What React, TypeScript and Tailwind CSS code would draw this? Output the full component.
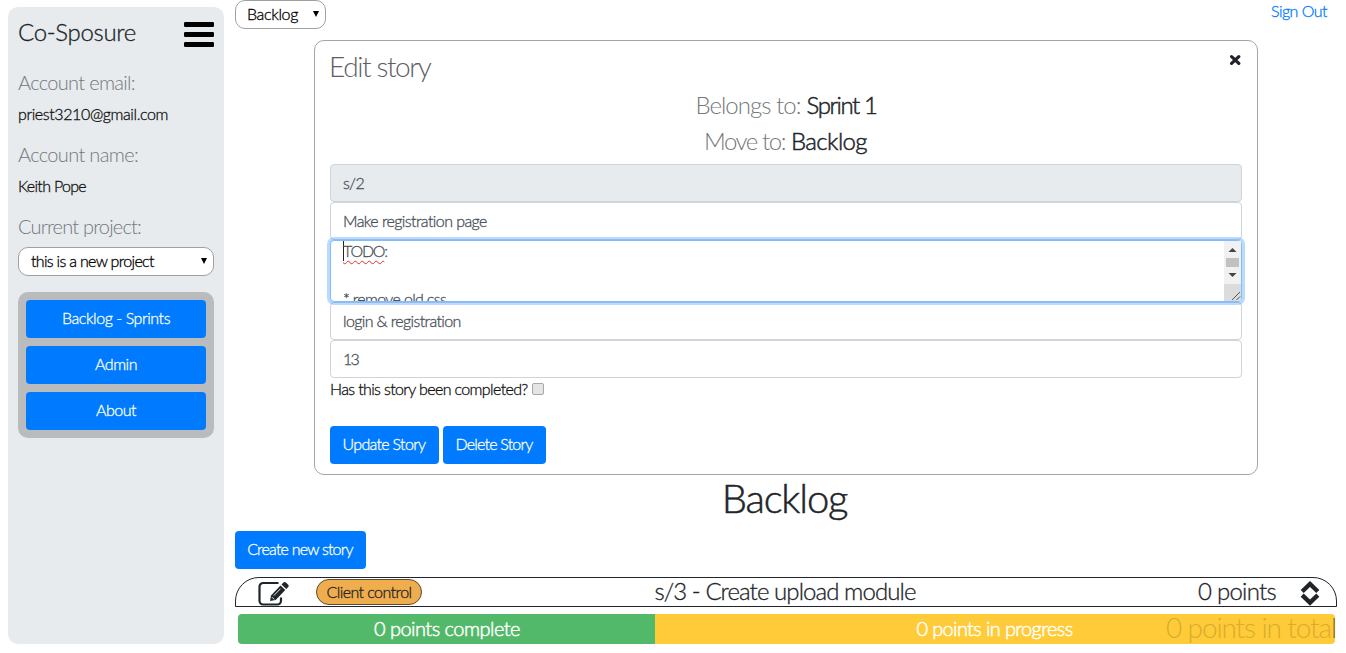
import React from 'react';

const BUTTON =
  'flex h-[38px] items-center justify-center whitespace-nowrap rounded-[4px] bg-[#007bff] pb-[2px] text-[16px] leading-6 text-white';
const FIELD = 'flex h-[38px] items-center rounded-[4px] border border-[#ced4da] px-3 text-[16px] leading-6 text-[#495057]';
const THIN = '[-webkit-text-stroke:0px]';

function BarsIcon() {
  return (
    <svg width="30" height="25" viewBox="0 0 30 25" fill="#000">
      <rect y="0" width="30" height="5" rx="1.2" />
      <rect y="10" width="30" height="5" rx="1.2" />
      <rect y="20" width="30" height="5" rx="1.2" />
    </svg>
  );
}

function EditIcon() {
  return (
    <svg width="31" height="25" viewBox="0 0 31 25">
      <path d="M20.500 2H5.200A3.700 3.700 0 0 0 1.500 5.700V19.800A3.700 3.700 0 0 0 5.200 23.500H19.300A3.700 3.700 0 0 0 23 19.800V16.500" fill="none" stroke="#212529" strokeWidth="2.200" />
      <path d="M12 20L13 14.400L22.500 4.600L27.300 9.100L17.700 19Z" fill="#212529" />
      <path d="M23.500 3.400L25.400 1.500Q26.700 .4 28 1.500L30.200 3.700Q31.200 4.900 30.200 6.100L28.300 8Z" fill="#212529" />
      <path d="M15.800 14.600L22.500 7.700M14 16.200L16.200 18.400" stroke="#fff" strokeWidth="0.900" />
    </svg>
  );
}

function CloseIcon() {
  return (
    <svg width="12" height="12" viewBox="0 0 12 12" stroke="#212529" strokeWidth="3.200" strokeLinecap="round">
      <path d="M2.600 2.600L9.800 9.400M9.800 2.600L2.600 9.400" />
    </svg>
  );
}

function SortIcon() {
  return (
    <svg width="20" height="25" viewBox="0 0 20 25" fill="none" stroke="#212529" strokeWidth="4.400">
      <path d="M2.200 10.500L10 3L17.800 10.500M2.200 14.200L10 21.700L17.800 14.200" />
    </svg>
  );
}

function Arrow() {
  return (
    <svg width="6" height="6" viewBox="0 0 6 6">
      <path d="M0 0H6L3 6Z" fill="#000" />
    </svg>
  );
}

function Sidebar() {
  return (
    <aside className="mt-[7px] ml-2 flex h-[637px] w-[216px] shrink-0 flex-col rounded-[10px] bg-[#e7ebee] px-[10px]">
      <div className="flex h-[54px] justify-between">
        <h1 className="pt-[10px] text-[24px] leading-[29px] tracking-[-0.32px] text-[#212529]">Co-Sposure</h1>
        <div className="pt-[15px]"><BarsIcon /></div>
      </div>
      <div className={`${THIN} pt-[9px] text-[20px] leading-6 tracking-[-0.68px] text-[#74787c]`}>Account email:</div>
      <div className="pt-[8px] text-[16px] leading-6 tracking-[-0.39px] text-[#111]">priest3210@gmail.com</div>
      <div className={`${THIN} pt-[16px] text-[20px] leading-6 tracking-[-0.66px] text-[#74787c]`}>Account name:</div>
      <div className="pt-[8px] text-[16px] leading-6 tracking-[-0.69px] text-[#111]">Keith Pope</div>
      <div className={`${THIN} pt-[16px] text-[20px] leading-6 tracking-[-0.82px] text-[#74787c]`}>Current project:</div>
      <div className="mt-[9px] flex h-[29px] items-center justify-between rounded-[10px] border border-[#a0a0a0] bg-white pr-[6px] pb-px pl-3 text-[16px] tracking-[-0.68px] text-black">
        this is a new project
        <Arrow />
      </div>
      <nav className="mt-4 flex flex-col gap-2 rounded-[10px] bg-[#b9bbbc] p-2">
        <button className={`${BUTTON} tracking-[-0.44px]`}>Backlog - Sprints</button>
        <button className={`${BUTTON} tracking-[-0.47px]`}>Admin</button>
        <button className={`${BUTTON} tracking-[-0.49px]`}>About</button>
      </nav>
    </aside>
  );
}

function Description() {
  return (
    <div className="relative z-10 flex h-[62px] justify-between rounded-[4px] border border-[#80bdff] bg-white shadow-[0_0_0_3px_rgba(0,123,255,0.27)]">
      <div className="h-[60px] overflow-hidden pl-3 text-[16px] leading-6 text-[#495057]">
        <div className="-mt-[2px] flex h-6 items-center">
          <span className="h-5 w-px bg-[#222]" />
          <span className="-ml-px tracking-[-1.19px] underline decoration-[#d33] decoration-wavy decoration-[1px] underline-offset-[3px]">TODO</span>:
        </div>
        <div className="h-6" />
        <div className="tracking-[-0.66px]">* remove old css</div>
      </div>
      <div className="flex h-[60px] w-[17px] flex-col bg-[#f1f1f1]">
        <svg width="17" height="60" viewBox="0 0 17 60">
          <path d="M4.500 11L8.500 7L12.500 11ZM4.500 32L8.500 36L12.500 32Z" fill="#444" />
          <path d="M2 17H15V26H2Z" fill="#c1c1c1" />
          <path d="M0 43H17V60H0Z" fill="#dcdcdc" />
          <path d="M8 59L16 51M12.500 59L16 55.500" stroke="#555" />
        </svg>
      </div>
    </div>
  );
}

function StoryEditor() {
  return (
    <section className="relative mr-[79px] ml-[79px] flex h-[435px] flex-col rounded-[10px] border border-[#a3a5a7] px-[15px]">
      <div className="absolute top-[13px] right-4"><CloseIcon /></div>
      <h2 className={`${THIN} -ml-px pt-[8px] text-[28px] leading-[34px] tracking-[-1.40px] text-[#5c6064]`}>Edit story</h2>
      <div className="mt-[3px] flex h-9 items-center justify-center gap-[6px] text-[24px] leading-[29px] text-[#212529]">
        <span className={`${THIN} tracking-[-0.97px] text-[#74787c]`}>Belongs to:</span>
        <span className="tracking-[-1.41px] [-webkit-text-stroke:0.5px_#212529]">Sprint 1</span>
      </div>
      <div className="flex h-9 items-center justify-center gap-[6px] pr-px text-[24px] leading-[29px] text-[#212529]">
        <span className={`${THIN} tracking-[-1.45px] text-[#74787c]`}>Move to:</span>
        <span className="tracking-[-0.60px] [-webkit-text-stroke:0.5px_#212529]">Backlog</span>
      </div>
      <div className="mt-[6px] flex flex-col">
        <div className={`${FIELD} bg-[#e7ebee] tracking-[-0.68px]`}>s/2</div>
        <div className={`${FIELD} tracking-[-0.58px]`}>Make registration page</div>
        <Description />
        <div className={`${FIELD} tracking-[-0.63px]`}>login &amp; registration</div>
        <div className={`${FIELD} tracking-[-1.8px]`}>13</div>
      </div>
      <div className="flex h-6 items-center gap-1 text-[16px] text-[#111]">
        <span className="-mt-[2px] tracking-[-0.63px]">Has this story been completed?</span>
        <span className="-mt-[3px] h-3 w-3 rounded-[2px] border border-[#a8a8a8] bg-[#e4e4e4]" />
      </div>
      <div className="mt-6 flex gap-1">
        <button className={`${BUTTON} w-[109px] pr-px tracking-[-0.68px]`}>Update Story</button>
        <button className={`${BUTTON} w-[103px] pr-px tracking-[-0.80px]`}>Delete Story</button>
      </div>
    </section>
  );
}

function StoryRow() {
  return (
    <div className="mt-2 grid h-[30px] grid-cols-[1fr_auto_1fr] grid-rows-[28px] items-center rounded-t-[24px] border border-[#212529] text-[24px] leading-[28px] text-[#212529]">
      <div className="flex items-center">
        <div className="ml-[22px] pt-[2px]"><EditIcon /></div>
        <span className="ml-[27px] flex h-[26px] w-[106px] items-center justify-center rounded-full border border-[#5b4a34] bg-[#f0ad4e] pb-px text-[16px] tracking-[-0.57px] text-[#222]">Client control</span>
      </div>
      <span className="pr-[2px] pb-[2px] tracking-[-0.92px]">s/3 - Create upload module</span>
      <div className="flex items-center justify-end">
        <span className="pb-[2px] tracking-[-0.73px]">0 points</span>
        <div className="mr-4 ml-6 pt-[3px]"><SortIcon /></div>
      </div>
    </div>
  );
}

function Progress() {
  return (
    <div className="relative mt-[7px] mr-px ml-[3px] flex h-[30px] text-[20px] leading-[29px] text-white">
      <div className="flex w-[417px] items-center justify-center rounded-l-[4px] bg-[#53b96a] pb-px pl-px tracking-[-0.52px] [-webkit-text-stroke:0.5px_white]">0 points complete</div>
      <div className="flex w-[680px] items-center justify-center rounded-r-[4px] bg-[#ffcb38] pr-px pb-px tracking-[-0.65px] [-webkit-text-stroke:0.5px_white]">0 points in progress</div>
      <div className={`${THIN} absolute -top-px right-0 whitespace-nowrap text-[28px] tracking-[-1.11px] text-[#d9ab32]`}>
        0 points in tota<span className="text-[#8c7428]">l</span>
      </div>
    </div>
  );
}

export default function App() {
  return (
    <div className="flex h-[653px] w-[1346px] overflow-hidden bg-white font-light [-webkit-text-stroke:0.3px_currentColor] [font-family:Lato,sans-serif]">
      <Sidebar />
      <main className="ml-[11px] flex w-[1102px] flex-col">
        <header className="flex h-10 items-start justify-between">
          <div className="flex h-[29px] w-[91px] items-center justify-between rounded-[10px] border border-[#a0a0a0] pr-[6px] pb-px pl-[11px] text-[16px] tracking-[-0.36px] text-black">
            Backlog
            <Arrow />
          </div>
          <a className="-mt-px mr-[10px] text-[16px] leading-6 tracking-[-0.51px] text-[#007bff]">Sign Out</a>
        </header>
        <StoryEditor />
        <h2 className="h-[56px] pr-[3px] text-center text-[40px] leading-[47px] tracking-[-1.15px] text-[#212529] [-webkit-text-stroke:0.5px_#212529]">Backlog</h2>
        <button className={`${BUTTON} w-[131px] pr-px tracking-[-0.79px]`}>Create new story</button>
        <StoryRow />
        <Progress />
      </main>
    </div>
  );
}
